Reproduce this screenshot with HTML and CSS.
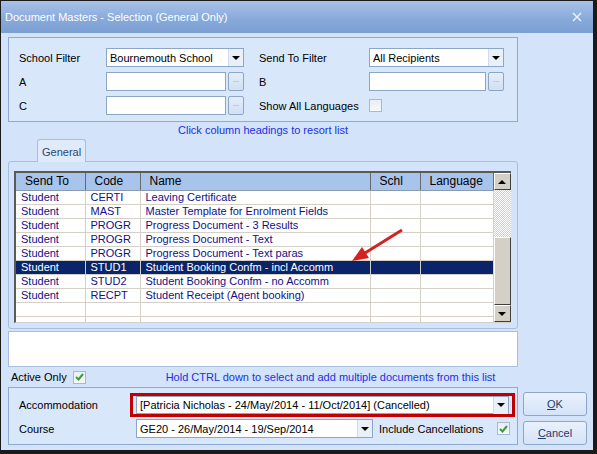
FILE: index.html
```html
<!DOCTYPE html>
<html lang="en">
<head>
    <meta charset="UTF-8">
    <title>Document Masters - Selection</title>
    <link rel="stylesheet" href="styles.css">
</head>
<body>

<div class="window">
    <div class="titlebar">
        <span class="title">Document Masters - Selection (General Only)</span>
        <svg class="close" width="10" height="10" viewBox="0 0 10 10">
            <path d="M1 1 L9 9 M9 1 L1 9" stroke="#eef3fb" stroke-width="1.4"/>
        </svg>
    </div>

    <div class="client">
        <div class="main">

            <!-- filtros -->
            <div class="panel filters">
                <span class="lbl">School Filter</span>
                <div class="combo"><span class="combo-text">Bournemouth School</span><span class="drop"><i></i></span></div>
                <span class="lbl lbl-right">Send To Filter</span>
                <div class="combo"><span class="combo-text">All Recipients</span><span class="drop"><i></i></span></div>

                <span class="lbl">A</span>
                <div class="lookup"><span class="edit"></span><span class="dots">...</span></div>
                <span class="lbl lbl-right">B</span>
                <div class="lookup"><span class="edit"></span><span class="dots">...</span></div>

                <span class="lbl">C</span>
                <div class="lookup"><span class="edit"></span><span class="dots">...</span></div>
                <span class="lbl lbl-right">Show All Languages</span>
                <div><span class="check"></span></div>
            </div>

            <div class="hint">Click column headings to resort list</div>

            <div class="tabs"><span class="tab">General</span></div>
            <div class="tab-page">
                <div class="grid">
                    <table>
                        <colgroup>
                            <col style="width:69px">
                            <col style="width:55px">
                            <col style="width:230px">
                            <col style="width:50px">
                            <col style="width:73px">
                        </colgroup>
                        <thead>
                            <tr><th>Send To</th><th>Code</th><th>Name</th><th>Schl</th><th>Language</th></tr>
                        </thead>
                        <tbody id="rows"></tbody>
                    </table>
                    <div class="vscroll">
                        <span class="sb-btn"><i class="up"></i></span>
                        <span class="sb-track"></span>
                        <span class="sb-thumb"></span>
                        <span class="sb-btn"><i></i></span>
                    </div>
                    <svg class="arrow" width="400" height="100" viewBox="0 0 400 100">
                        <line x1="386" y1="57" x2="349" y2="80" stroke="#d42222" stroke-width="3"/>
                        <polygon points="336,88 353,85 346,74" fill="#d42222"/>
                    </svg>
                </div>
            </div>

            <div class="memo"></div>

            <div class="active-row">
                <span>Active Only</span>
                <span class="check on"><svg width="9" height="8" viewBox="0 0 9 8"><path d="M1 4 L3.5 6.5 L8 1" fill="none" stroke="#3c9c3c" stroke-width="2"/></svg></span>
                <span class="hint-ctrl">Hold CTRL down to select and add multiple documents from this list</span>
            </div>

            <div class="panel booking">
                <span class="lbl">Accommodation</span>
                <div class="marked">
                    <div class="combo"><span class="combo-text">[Patricia Nicholas - 24/May/2014 - 11/Oct/2014] (Cancelled)</span><span class="drop"><i></i></span></div>
                </div>
                <span class="lbl">Course</span>
                <div class="course-row">
                    <div class="combo course"><span class="combo-text">GE20 - 26/May/2014 - 19/Sep/2014</span><span class="drop"><i></i></span></div>
                    <span class="inc">Include Cancellations</span>
                    <span class="check on"><svg width="9" height="8" viewBox="0 0 9 8"><path d="M1 4 L3.5 6.5 L8 1" fill="none" stroke="#3c9c3c" stroke-width="2"/></svg></span>
                </div>
            </div>
        </div>

        <div class="side">
            <button class="btn"><u>O</u>K</button>
            <button class="btn"><u>C</u>ancel</button>
        </div>
    </div>
</div>

<script>
    let docs = [
        { sendTo: "Student", code: "CERTI", name: "Leaving Certificate" },
        { sendTo: "Student", code: "MAST", name: "Master Template for Enrolment Fields" },
        { sendTo: "Student", code: "PROGR", name: "Progress Document - 3 Results" },
        { sendTo: "Student", code: "PROGR", name: "Progress Document - Text" },
        { sendTo: "Student", code: "PROGR", name: "Progress Document - Text paras" },
        { sendTo: "Student", code: "STUD1", name: "Student Booking Confm - incl Accomm", selected: true },
        { sendTo: "Student", code: "STUD2", name: "Student Booking Confm - no Accomm" },
        { sendTo: "Student", code: "RECPT", name: "Student Receipt (Agent booking)" },
        { sendTo: "", code: "", name: "" },
        { sendTo: "", code: "", name: "" }
    ];

    // monta as linhas da grade
    const tbody = document.getElementById("rows");
    docs.forEach(doc => {
        const tr = document.createElement("tr");
        if (doc.selected) tr.classList.add("selected");
        tr.innerHTML = `<td>${doc.sendTo}</td><td>${doc.code}</td><td>${doc.name}</td><td></td><td></td>`;
        tbody.appendChild(tr);
    });
</script>

</body>
</html>
```

FILE: styles.css
```css
body {
    margin: 0;
    font-family: "Liberation Sans", Arial, sans-serif;
    font-size: 11px;
    color: #000;
    background: #fff;
}
.window {
    width: 597px;
    height: 454px;
    box-sizing: border-box;
    border-left: 1px solid #1b1b1b;
    border-top: 1px solid #1b1b1b;
    border-right: 4px solid #1b1b1b;
    border-bottom: 4px solid #1b1b1b;
    background: #d3e3f9;
    display: flex;
    flex-direction: column;
}
.titlebar {
    height: 32px;
    flex: 0 0 auto;
    background: linear-gradient(#a8c2e7, #86a8da 60%, #7c9fd3);
    display: flex;
    align-items: center;
    justify-content: space-between;
    padding: 0 11px 0 4px;
}
.title {
    color: #fff;
    font-size: 11px;
}
.client {
    flex: 1;
    display: flex;
    padding: 4px 6px 5px 7px;
}
.main {
    width: 510px;
    display: flex;
    flex-direction: column;
}
.side {
    width: 64px;
    margin-left: 5px;
    display: flex;
    flex-direction: column;
    justify-content: flex-end;
    gap: 5px;
}
.panel {
    box-sizing: border-box;
    border: 1px solid #8eaad3;
    background: #d9e7fb;
}
.filters {
    height: 85px;
    padding: 10px 0 0 10px;
    display: grid;
    grid-template-columns: 87px 138px 125px 135px;
    grid-template-rows: 19px 19px 19px;
    row-gap: 5px;
    align-items: center;
}
.lbl {
    white-space: nowrap;
}
.lbl-right {
    padding-left: 15px;
}
.combo {
    height: 19px;
    box-sizing: border-box;
    border: 1px solid #8ea6c6;
    background: #fff;
    display: flex;
    align-items: center;
}
.combo-text {
    flex: 1;
    padding-left: 3px;
    white-space: nowrap;
    overflow: hidden;
}
.drop {
    width: 14px;
    height: 17px;
    background: #eaf0f8;
    border-left: 1px solid #d3dceb;
    display: flex;
    align-items: center;
    justify-content: center;
}
.drop i, .sb-btn i {
    width: 0;
    height: 0;
    border-left: 4px solid transparent;
    border-right: 4px solid transparent;
    border-top: 4px solid #000;
}
.sb-btn i.up {
    border-top: none;
    border-bottom: 4px solid #000;
}
.lookup {
    display: flex;
    gap: 2px;
    height: 19px;
}
.edit {
    flex: 1;
    box-sizing: border-box;
    border: 1px solid #8ea6c6;
    background: #fff;
}
.dots {
    width: 16px;
    box-sizing: border-box;
    border: 1px solid #8ea6c6;
    border-radius: 2px;
    background: linear-gradient(#e4edf9, #d2e0f4);
    color: #8a98ad;
    font-size: 8px;
    text-align: center;
    line-height: 14px;
}
.check {
    display: inline-flex;
    flex: 0 0 auto;
    width: 13px;
    height: 13px;
    box-sizing: border-box;
    border: 1px solid #a9b8cd;
    background: linear-gradient(#e9eef5, #f6f8fb);
    align-items: center;
    justify-content: center;
    vertical-align: middle;
}
.hint {
    height: 16px;
    padding-top: 1px;
    box-sizing: border-box;
    text-align: center;
    color: #1d2fe4;
    line-height: 14px;
}
.tabs {
    margin-top: 1px;
    padding-left: 29px;
    height: 23px;
    position: relative;
    z-index: 1;
}
.tab {
    display: inline-block;
    height: 23px;
    box-sizing: border-box;
    padding: 6px 4px 0 4px;
    border: 1px solid #a7bedf;
    border-bottom: none;
    border-radius: 3px 3px 0 0;
    background: #dfeafb;
    color: #2a4673;
}
.tab-page {
    margin-top: -1px;
    height: 168px;
    box-sizing: border-box;
    border: 1px solid #a7bedf;
    border-radius: 3px;
    padding: 9px 6px 0 5px;
}
.grid {
    position: relative;
    height: 152px;
    box-sizing: border-box;
    border-top: 2px solid #5a5a5a;
    border-left: 2px solid #5a5a5a;
    border-bottom: 1px solid #d4d0c8;
    background: #fff;
    display: flex;
    overflow: hidden;
}
.grid table {
    width: 477px;
    table-layout: fixed;
    border-collapse: collapse;
    align-self: flex-start;
}
.grid th {
    height: 17px;
    box-sizing: border-box;
    padding: 0 0 0 9px;
    background: #a8c4eb;
    border-right: 1px solid #6a6a6a;
    border-bottom: 1px solid #8a9ab0;
    font-weight: normal;
    font-size: 12px;
    text-align: left;
    white-space: nowrap;
}
.grid td {
    height: 14px;
    box-sizing: border-box;
    padding: 0 0 0 5px;
    border-right: 1px solid #d4d0c8;
    border-bottom: 1px solid #d4d0c8;
    color: #10108a;
    line-height: 12px;
    white-space: nowrap;
    overflow: hidden;
}
.grid tr.selected td {
    background: #0a246a;
    color: #fff;
}
.vscroll {
    width: 17px;
    height: 149px;
    display: flex;
    flex-direction: column;
}
.sb-btn {
    height: 17px;
    box-sizing: border-box;
    background: #d4d0c8;
    border: 1px solid;
    border-color: #fff #404040 #404040 #fff;
    display: flex;
    align-items: center;
    justify-content: center;
}
.sb-track {
    height: 47px;
    background: repeating-conic-gradient(#d4d0c8 0 25%, #fff 0 50%) 0 0 / 2px 2px;
}
.sb-thumb {
    flex: 1;
    background: #d4d0c8;
    border: 1px solid;
    border-color: #fff #404040 #404040 #fff;
}
.arrow {
    position: absolute;
    left: 0;
    top: 0;
}
.memo {
    margin-top: 2px;
    height: 36px;
    box-sizing: border-box;
    border: 1px solid #a7bedf;
    background: #fff;
}
.active-row {
    height: 20px;
    display: flex;
    align-items: center;
    padding-left: 3px;
    white-space: nowrap;
}
.active-row .check {
    margin-left: 6px;
}
.hint-ctrl {
    margin-left: 80px;
    color: #1d2fe4;
}
.booking {
    height: 58px;
    padding: 5px 2px 0 10px;
    display: grid;
    grid-template-columns: 111px 385px;
    grid-template-rows: 24px 19px;
    row-gap: 2px;
    align-items: center;
}
.marked {
    height: 24px;
    box-sizing: border-box;
    border: 3px solid #c00000;
    padding: 0 3px;
}
.marked .combo {
    height: 18px;
}
.course-row {
    display: flex;
    align-items: center;
    padding-left: 6px;
}
.course {
    width: 237px;
}
.inc {
    margin-left: 6px;
    width: 118px;
    white-space: nowrap;
}
.btn {
    height: 24px;
    box-sizing: border-box;
    border: 1px solid #8ea6c6;
    border-radius: 3px;
    background: linear-gradient(#e9f1fc, #d4e3f8);
    color: #1e3c6e;
    font-family: "Liberation Sans", Arial, sans-serif;
    font-size: 11px;
    padding: 0;
}
```
